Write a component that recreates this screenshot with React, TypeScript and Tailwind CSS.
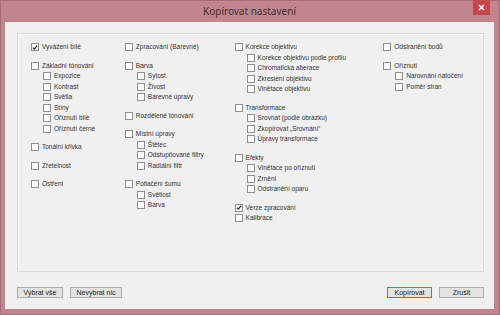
import React from "react";

type Item = { label: string; checked?: boolean; subs?: string[] };

// sloupce dialogu – každý sloupec je seznam skupin
const columns: { width: string; groups: Item[][] }[] = [
  {
    width: "w-[94px]",
    groups: [
      [{ label: "Vyvážení bílé", checked: true }],
      [{ label: "Základní tónování", subs: ["Expozice", "Kontrast", "Světla", "Stíny", "Oříznutí bílé", "Oříznutí černé"] }],
      [{ label: "Tonální křivka" }],
      [{ label: "Zřetelnost" }],
      [{ label: "Ostření" }],
    ],
  },
  {
    width: "w-[110px]",
    groups: [
      [{ label: "Zpracování (Barevné)" }],
      [{ label: "Barva", subs: ["Sytost", "Živost", "Barevné úpravy"] }],
      [{ label: "Rozdělené tónování" }],
      [{ label: "Místní úpravy", subs: ["Štětec", "Odstupňované filtry", "Radiální filtr"] }],
      [{ label: "Potlačení šumu", subs: ["Světlost", "Barva"] }],
    ],
  },
  {
    width: "w-[149px]",
    groups: [
      [{ label: "Korekce objektivu", subs: ["Korekce objektivu podle profilu", "Chromatická aberace", "Zkreslení objektivu", "Vinětace objektivu"] }],
      [{ label: "Transformace", subs: ["Srovnat (podle obrázku)", "Zkopírovat „Srovnání“", "Úpravy transformace"] }],
      [{ label: "Efekty", subs: ["Vinětace po oříznutí", "Zrnění", "Odstranění oparu"] }],
      [{ label: "Verze zpracování", checked: true }, { label: "Kalibrace" }],
    ],
  },
  {
    width: "w-[100px]",
    groups: [
      [{ label: "Odstranění bodů" }],
      [{ label: "Oříznutí", subs: ["Narovnání natočení", "Poměr stran"] }],
    ],
  },
];

function Check({ label, checked }: { label: string; checked?: boolean }) {
  return (
    <div className="flex h-[10.5px] items-center gap-[3px] whitespace-nowrap">
      <span className="flex h-[8px] w-[8px] shrink-0 items-center justify-center border border-[#8e8f8f] bg-white">
        {checked && (
          <svg width="7" height="7" viewBox="0 0 7 7">
            <path d="M1 3.6 L2.7 5.4 L6 1.2" fill="none" stroke="#222" strokeWidth="1.4" />
          </svg>
        )}
      </span>
      <span className="leading-none">{label}</span>
    </div>
  );
}

function Button({ label, primary, width }: { label: string; primary?: boolean; width: string }) {
  return (
    <button
      className={`${width} h-[11px] border bg-[#e3e3e3] text-[7px] leading-none text-[#222] ${
        primary ? "border-[#3a8ad0]" : "border-[#acacac]"
      }`}
    >
      {label}
    </button>
  );
}

export default function App() {
  return (
    <div
      className="flex h-[315px] w-[500px] flex-col border border-[#a86c76] bg-[#c2858e] pl-[4px] pr-[5px] pb-[5px]"
      style={{ fontFamily: '"Liberation Sans", "Noto Sans", sans-serif' }}
    >
      {/* titulek */}
      <div className="relative flex h-[21px] shrink-0 items-center justify-center">
        <span className="font-['Noto_Sans',sans-serif] text-[10px] text-[#452f33]">Kopírovat nastavení</span>
        <div className="absolute right-[4px] top-[-1px] flex h-[15px] w-[17px] items-center justify-center bg-[#c8474f]">
          <svg width="7" height="7" viewBox="0 0 7 7">
            <path d="M1 1 L6 6 M6 1 L1 6" stroke="white" strokeWidth="1.5" />
          </svg>
        </div>
      </div>

      <div className="flex flex-1 flex-col bg-[#f0f0f0] pl-[12px] pr-[10px] pt-[11px]">
        {/* skupina */}
        <div className="flex h-[239px] border border-[#dcdcdc] pl-[13px] pt-[8px] text-[6.5px] text-[#333] shadow-[inset_1px_1px_0_#fafafa]">
          {columns.map((col, ci) => (
            <div key={ci} className={`${col.width} flex flex-col gap-[8px]`}>
              {col.groups.map((g, gi) => (
                <div key={gi} className="flex flex-col">
                  {g.map((it) => (
                    <div key={it.label}>
                      <Check label={it.label} checked={it.checked} />
                      {it.subs && (
                        <div className="pl-[12px]">
                          {it.subs.map((s) => (
                            <Check key={s} label={s} />
                          ))}
                        </div>
                      )}
                    </div>
                  ))}
                </div>
              ))}
            </div>
          ))}
        </div>

        {/* tlačítka */}
        <div className="mt-[15px] flex items-center">
          <div className="flex gap-[7px]">
            <Button label="Vybrat vše" width="w-[46px]" />
            <Button label="Nevybrat nic" width="w-[52px]" />
          </div>
          <div className="ml-auto flex gap-[7px]">
            <Button label="Kopírovat" primary width="w-[45px]" />
            <Button label="Zrušit" width="w-[45px]" />
          </div>
        </div>
      </div>
    </div>
  );
}
